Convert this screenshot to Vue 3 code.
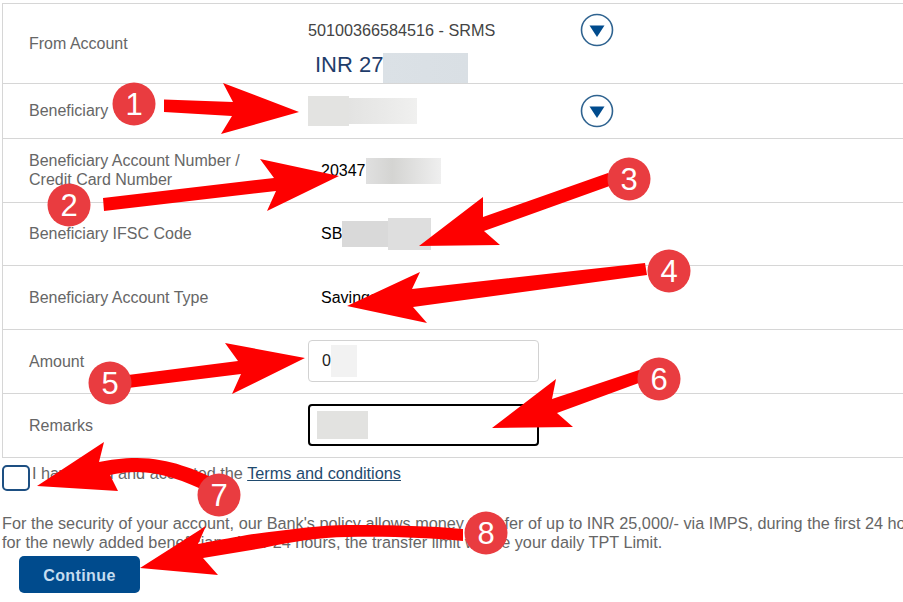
<script setup>
const arrows = [
  '164,99.5 233,102 223,83 299,112 221,134 232,116 164,112',
  '103,198 274,178 260,159 339,176 267,211 276,191 104,211',
  '608,173 483,217 483,197 419,246 500,245 484,231 618,183',
  '645,263 412,289 420,272 347,306 427,323 413,307 647,275',
  '128,375 238,361 225,343 305,358 232,394 241,374 128,388',
  '642,369 552,399 556,379 492,428 573,427 557,413 647,380',
]

const curves = [
  'M213 478 C198 471 170 458 137 458 C122 458 110 460 99 462 L104 442 L37 486 L118 491 L110 475 C118 473 127 472 137 472 C160 472 185 481 210 493 Z',
  'M463 529 C430 526 397 525 347 525 C320 525 285 530 247 535 C230 538 212 541 198 544 L206 526 L140 568 L218 575 L203 558 L263 548 C290 542 320 537 347 537 C390 536 430 538 463 541 Z',
]

const badges = [
  { n: 1, x: 134, y: 104 },
  { n: 2, x: 69, y: 205 },
  { n: 3, x: 629, y: 179 },
  { n: 4, x: 669, y: 271 },
  { n: 5, x: 110, y: 383 },
  { n: 6, x: 659, y: 379 },
  { n: 7, x: 219, y: 495 },
  { n: 8, x: 486, y: 533 },
]
</script>

<template>
  <div class="page">
    <div class="form">
      <div class="row row-from">
        <div class="label">From Account</div>
        <div class="value">
          <div class="from-line">
            <span class="account">50100366584516 - SRMS</span>
            <svg class="drop" width="34" height="34" viewBox="0 0 34 34">
              <circle cx="17" cy="17" r="15.5" fill="#fff" stroke="#2f6390" stroke-width="1.6" />
              <path d="M9.5 12.5h15L17 24z" fill="#004b8d" />
            </svg>
          </div>
          <div class="balance">INR 27<span class="blur blur-balance"></span></div>
        </div>
      </div>

      <div class="row row-benef">
        <div class="label">Beneficiary</div>
        <div class="value benef-value">
          <span class="blur-group">
            <span class="blur blur-b1"></span>
            <span class="blur blur-b2"></span>
          </span>
          <svg class="drop drop-2" width="34" height="34" viewBox="0 0 34 34">
            <circle cx="17" cy="17" r="15.5" fill="#fff" stroke="#2f6390" stroke-width="1.6" />
            <path d="M9.5 12.5h15L17 24z" fill="#004b8d" />
          </svg>
        </div>
      </div>

      <div class="row">
        <div class="label two-line">Beneficiary Account Number /<br />Credit Card Number</div>
        <div class="value plain">20347<span class="blur blur-acc"></span></div>
      </div>

      <div class="row row-ifsc">
        <div class="label">Beneficiary IFSC Code</div>
        <div class="value plain">
          SB<span class="blur-group">
            <span class="blur blur-i1"></span>
            <span class="blur blur-i2"></span>
          </span>
        </div>
      </div>

      <div class="row">
        <div class="label">Beneficiary Account Type</div>
        <div class="value plain">Savings</div>
      </div>

      <div class="row">
        <div class="label">Amount</div>
        <div class="value">
          <div class="field">0<span class="blur blur-amt"></span></div>
        </div>
      </div>

      <div class="row">
        <div class="label">Remarks</div>
        <div class="value">
          <div class="field field-focus"><span class="blur blur-rem"></span></div>
        </div>
      </div>
    </div>

    <div class="terms">
      <span class="check"></span>
      <span class="terms-text">I have read and accepted the <a class="link">Terms and conditions</a></span>
    </div>

    <p class="note">
      For the security of your account, our Bank's policy allows money transfer of up to INR 25,000/- via IMPS, during the first 24 hours<br />
      for the newly added beneficiary. After 24 hours, the transfer limit will be your daily TPT Limit.
    </p>

    <button class="continue">Continue</button>

    <!-- red annotations drawn over the form -->
    <svg class="marks" width="903" height="602" viewBox="0 0 903 602">
      <polygon v-for="(p, i) in arrows" :key="i" :points="p" fill="#fe0000" />
      <path v-for="(d, i) in curves" :key="'c' + i" :d="d" fill="#fe0000" />
      <g v-for="b in badges" :key="b.n">
        <circle :cx="b.x" :cy="b.y" r="21.5" fill="#e93c40" />
        <text :x="b.x" :y="b.y + 11" class="num" text-anchor="middle">{{ b.n }}</text>
      </g>
    </svg>
  </div>
</template>

<style>
html, body {
  margin: 0;
  background: #fff;
}
</style>

<style scoped>
.page {
  position: relative;
  width: 903px;
  height: 602px;
  overflow: hidden;
  background: #fff;
  color: #666;
  font-family: "Liberation Sans", Arial, sans-serif;
  font-size: 16px;
}

.form {
  margin: 3px 0 0 2px;
  border-top: 1px solid #d6d6d6;
  border-left: 1px solid #d6d6d6;
}

.row {
  display: grid;
  grid-template-columns: 305px 1fr;
  align-items: center;
  height: 63px;
  border-bottom: 1px solid #d6d6d6;
}

.row-from {
  height: 79px;
  align-items: start;
}

.row-benef {
  height: 54px;
}

.row-ifsc {
  height: 62px;
}

.label {
  padding-left: 26px;
  line-height: 19px;
}

.row-from .label {
  padding-top: 30px;
}

.row-benef .label,
.row-ifsc .label {
  padding-bottom: 1px;
}

.two-line {
  padding-bottom: 2px;
}

.value {
  color: #444;
}

.plain {
  padding-left: 13px;
  color: #000;
  display: flex;
  align-items: center;
}

.from-line {
  display: flex;
  align-items: center;
  height: 32px;
  margin-top: 10px;
}

.account {
  width: 272px;
  font-size: 16.2px;
}

.drop {
  flex: none;
}

.balance {
  display: flex;
  align-items: center;
  margin: 4px 0 0 7px;
  height: 30px;
  color: #1f3d6b;
  font-size: 22px;
}

.benef-value {
  display: flex;
  align-items: center;
  height: 100%;
}

.drop-2 {
  margin-left: 163px;
}

.blur {
  display: inline-block;
  background: #e2e2e0;
}

.blur-group {
  display: inline-flex;
  align-items: center;
}

.blur-balance {
  width: 85px;
  height: 30px;
  margin-top: 6px;
  background: linear-gradient(90deg, #dbe1e6, #d9dfe4);
}

.blur-b1 {
  width: 41px;
  height: 30px;
  background: #e3e3e1;
}

.blur-b2 {
  width: 68px;
  height: 26px;
  background: linear-gradient(90deg, #e3e3e2, #f0f0ef);
}

.blur-acc {
  width: 75px;
  height: 26px;
  background: linear-gradient(90deg, #e0e0e0, #d4d4d2 35%, #efefef);
}

.blur-i1 {
  width: 46px;
  height: 26px;
  background: #d9d9d9;
}

.blur-i2 {
  width: 43px;
  height: 32px;
  background: #dedede;
}

.field {
  display: flex;
  align-items: center;
  box-sizing: border-box;
  width: 231px;
  height: 42px;
  margin-bottom: 1px;
  padding-left: 13px;
  border: 1px solid #d2d2d2;
  border-radius: 4px;
  color: #222;
}

.field-focus {
  padding-left: 7px;
  border: 2px solid #000;
}

.blur-amt {
  width: 26px;
  height: 32px;
  background: #f2f2f2;
}

.blur-rem {
  width: 51px;
  height: 28px;
  background: #e2e2e0;
}

.terms {
  display: flex;
  align-items: flex-start;
  gap: 2px;
  margin: 7px 0 0 2px;
  height: 26px;
}

.check {
  box-sizing: border-box;
  width: 28px;
  height: 26px;
  border: 2px solid #1d4f82;
  border-radius: 5px;
}

.terms-text {
  font-size: 16.3px;
  line-height: 17px;
}

.link {
  color: #1f4a6e;
  text-decoration: underline;
}

.note {
  margin: 23px 0 0 2px;
  font-size: 16.25px;
  line-height: 19px;
  white-space: nowrap;
}

.continue {
  display: block;
  width: 121px;
  height: 37px;
  margin: 4px 0 0 19px;
  padding: 2px 0 0;
  border: none;
  border-radius: 5px;
  background: #004b8d;
  color: #c5ddf0;
  font-family: "Liberation Sans", Arial, sans-serif;
  font-size: 16px;
  font-weight: 700;
  letter-spacing: 0.4px;
}

.marks {
  position: absolute;
  top: 0;
  left: 0;
}

.num {
  fill: #fff;
  font-family: "Liberation Sans", Arial, sans-serif;
  font-size: 31px;
}
</style>
